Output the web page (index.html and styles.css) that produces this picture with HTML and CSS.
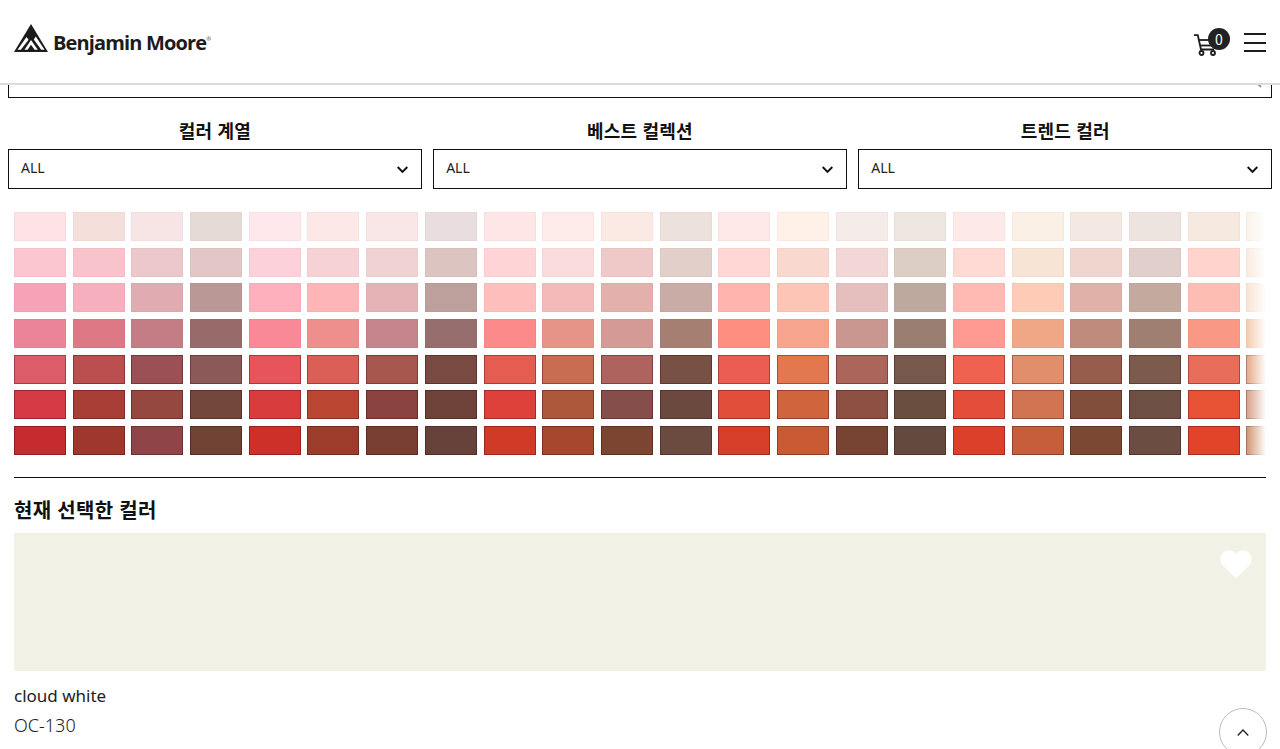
FILE: index.html
```html
<!DOCTYPE html>
<html lang="ko">
<head>
  <meta charset="UTF-8">
  <title>Benjamin Moore</title>
  <link rel="stylesheet" href="styles.css">
</head>
<body>
  <header class="site-header">
    <a class="logo">
      <svg class="logo-mark" width="34" height="28" viewBox="0 0 34 28">
        <path d="M17 0 L34 28 H0 Z" fill="#1c1c1c"/>
        <path d="M12.5 13 L3.5 25.8 H6.8 L14.6 15.8 Z" fill="#fff"/>
        <path d="M17 16 L10.5 25.8 H13.6 L17 20.8 L20.6 25.8 H23.8 Z" fill="#fff"/>
        <path d="M21.8 12.5 L30.6 25.8 H27.2 L19.8 15.4 Z" fill="#fff"/>
      </svg>
      <span class="logo-text">Benjamin Moore<sup class="logo-reg">®</sup></span>
    </a>
    <div class="header-tools">
      <a class="cart">
        <svg width="26" height="24" viewBox="0 0 26 24" fill="none" stroke="#1c1c1c" stroke-width="1.8">
          <path d="M0 2.2 H3.8 L7 16.5 H20"/>
          <path d="M4.5 7 H18"/>
          <path d="M6 12.5 H19"/>
          <circle cx="7.5" cy="20" r="2"/>
          <circle cx="19" cy="20" r="2"/>
        </svg>
        <span class="cart-count">0</span>
      </a>
      <a class="menu-btn"><span></span><span></span><span></span></a>
    </div>
  </header>

  <div class="search-box">
    <svg class="search-icon" width="16" height="16" viewBox="0 0 16 16" fill="none" stroke="#999" stroke-width="2">
      <circle cx="6" cy="6" r="5"/>
      <path d="M9.5 9.5 L15 15"/>
    </svg>
  </div>

  <section class="filters">
    <div class="filter">
      <h3 class="filter-title">컬러 계열</h3>
      <div class="select"><span>ALL</span><svg width="11" height="8" viewBox="0 0 11 8" fill="none" stroke="#111" stroke-width="1.9"><path d="M0.7 1 L5.5 6 L10.3 1"/></svg></div>
    </div>
    <div class="filter">
      <h3 class="filter-title">베스트 컬렉션</h3>
      <div class="select"><span>ALL</span><svg width="11" height="8" viewBox="0 0 11 8" fill="none" stroke="#111" stroke-width="1.9"><path d="M0.7 1 L5.5 6 L10.3 1"/></svg></div>
    </div>
    <div class="filter">
      <h3 class="filter-title">트렌드 컬러</h3>
      <div class="select"><span>ALL</span><svg width="11" height="8" viewBox="0 0 11 8" fill="none" stroke="#111" stroke-width="1.9"><path d="M0.7 1 L5.5 6 L10.3 1"/></svg></div>
    </div>
  </section>

  <section class="palette" id="palette"></section>

  <section class="current">
    <h2 class="current-title">현재 선택한 컬러</h2>
    <div class="current-color">
      <svg class="heart" width="32" height="29" viewBox="0 0 32 29"><path d="M16 28.5 L3 15.5 C-1 11 0 3.5 5 1.2 C9.5 -0.8 13.5 0.8 16 4.2 C18.5 0.8 22.5 -0.8 27 1.2 C32 3.5 33 11 29 15.5 Z" fill="#fff"/></svg>
    </div>
    <p class="color-name">cloud white</p>
    <p class="color-code">OC-130</p>
  </section>

  <a class="to-top">
    <svg width="12" height="7" viewBox="0 0 12 7" fill="none" stroke="#222" stroke-width="1.3"><path d="M0.7 6.5 L6 1 L11.3 6.5"/></svg>
  </a>

  <script src="palette.js"></script>
</body>
</html>
```

FILE: styles.css
```css
* {
  box-sizing: border-box;
}

html, body {
  height: 100%;
  overflow: hidden;
}

body {
  margin: 0;
  background: #fff;
  color: #111;
  font-family: "Noto Sans CJK KR", "Noto Sans", sans-serif;
}

.site-header {
  position: relative;
  z-index: 10;
  display: flex;
  justify-content: space-between;
  align-items: center;
  height: 85px;
  padding: 0 14px;
  background: #fff;
  border-bottom: 2px solid #dcdcdc;
}

.logo {
  display: flex;
  align-items: flex-start;
  gap: 5px;
  height: 36px;
}

.logo-text {
  margin-top: 6px;
  font-family: "Open Sans", sans-serif;
  font-size: 20px;
  font-weight: 700;
  line-height: 26px;
  color: #1c1c1c;
  letter-spacing: -0.85px;
}

.logo-reg {
  font-size: 6px;
  color: #777;
  vertical-align: 9px;
  line-height: 0;
}

.header-tools {
  display: flex;
  align-items: center;
  gap: 14px;
}

.cart {
  position: relative;
  display: block;
  width: 36px;
  height: 24px;
  margin-top: 7px;
}

.cart svg {
  display: block;
}

.cart-count {
  position: absolute;
  top: -5px;
  right: 0;
  width: 22px;
  height: 22px;
  border-radius: 50%;
  background: #222;
  color: #fff;
  font-size: 14px;
  line-height: 22px;
  text-align: center;
}

.menu-btn {
  display: flex;
  flex-direction: column;
  gap: 6.5px;
  width: 22px;
  margin-top: 2px;
}

.menu-btn span {
  height: 2px;
  background: #1c1c1c;
}

.search-box {
  position: relative;
  height: 40px;
  margin: -27px 8px 0;
  border: 1px solid #111;
}

.search-icon {
  position: absolute;
  right: 9px;
  top: 13px;
}

.filters {
  display: grid;
  grid-template-columns: repeat(3, 1fr);
  gap: 11.5px;
  margin: 20px 8px 0;
}

.filter-title {
  margin: 0 0 6px;
  font-size: 18px;
  font-weight: 700;
  line-height: 25px;
  letter-spacing: 0.2px;
  text-align: center;
}

.select {
  display: flex;
  justify-content: space-between;
  align-items: center;
  height: 40px;
  padding: 0 13px 0 12px;
  border: 1px solid #111;
  font-family: "Noto Sans", sans-serif;
  font-size: 14px;
}

.select span {
  margin-bottom: 3px;
  color: #222;
}

.select svg {
  margin-top: 1px;
}

.palette {
  position: relative;
  display: grid;
  grid-template-columns: repeat(22, 52px);
  grid-auto-rows: 29px;
  gap: 6.7px;
  margin: 23px 14px 0;
  overflow: hidden;
}

.palette::after {
  content: "";
  position: absolute;
  top: 0;
  right: 0;
  bottom: 0;
  width: 24px;
  background: linear-gradient(to right, rgba(255, 255, 255, 0), #fff);
}

.swatch {
  border: 1px solid rgba(60, 20, 20, 0.03);
}

.swatch.deep {
  border-color: rgba(50, 10, 10, 0.35);
}

.current {
  margin: 22px 14px 0;
  border-top: 1px solid #111;
}

.current-title {
  margin: 17px 0 9px;
  font-size: 20px;
  font-weight: 700;
  line-height: 29px;
  letter-spacing: 0.3px;
}

.current-color {
  position: relative;
  height: 138px;
  background: #f1f1e6;
}

.heart {
  position: absolute;
  top: 17px;
  right: 14px;
}

.color-name {
  margin: 12px 0 0;
  font-family: "Noto Sans", sans-serif;
  font-size: 17px;
  line-height: 26px;
  color: #222;
}

.color-code {
  margin: 3px 0 0;
  font-family: "Noto Sans", sans-serif;
  font-size: 18px;
  font-weight: 300;
  line-height: 26px;
  color: #222;
}

.to-top {
  position: fixed;
  left: 1219px;
  top: 708px;
  display: flex;
  justify-content: center;
  align-items: center;
  width: 48px;
  height: 48px;
  border: 1px solid #bbb;
  border-radius: 50%;
  background: #fff;
}
```

FILE: palette.js
```js
// one list per column, lightest row first
var columns = [
  ["#fde2e6", "#fbc6d0", "#f6a3b7", "#ec8499", "#dc5d69", "#d43a44", "#c42c2f"],
  ["#f4dfda", "#f9c3cb", "#f6b0bd", "#dd7885", "#bb4e4e", "#a93e36", "#9f372c"],
  ["#f7e5e5", "#ecc8cc", "#e0acb1", "#c47d85", "#9a5054", "#95483f", "#8f4548"],
  ["#e6dbd4", "#e2c7c7", "#ba9896", "#986b6b", "#8b5a58", "#73473c", "#704234"],
  ["#fee8ec", "#fdd1da", "#feb0bc", "#f98997", "#e7545a", "#d93c3c", "#cd2f29"],
  ["#fce9e7", "#f7d2d5", "#fdb5b8", "#ee8f8d", "#db5f56", "#bb4632", "#9c3d2b"],
  ["#f9e6e6", "#f0d2d2", "#e5b2b5", "#c6858c", "#a6584f", "#8a423e", "#793e32"],
  ["#e9dde0", "#dcc4c1", "#bd9f9b", "#966e6e", "#784a42", "#6d4239", "#66423a"],
  ["#fee6e7", "#fed4d6", "#febfbc", "#fc8a8a", "#e55c50", "#dd413a", "#d03b27"],
  ["#fcebe9", "#f9dcdb", "#f4baba", "#e69488", "#c96c50", "#ad583b", "#a5482d"],
  ["#fbe9e4", "#efc9c7", "#e4b0ac", "#d49a96", "#af635e", "#864e4a", "#7c4532"],
  ["#ece2db", "#e2cfc9", "#c8aca5", "#a58072", "#785145", "#6c493f", "#6b4a40"],
  ["#fee9e8", "#ffd8d5", "#ffb4ae", "#fe8e80", "#ea5d50", "#e14f3b", "#d73e29"],
  ["#fff0e8", "#f9d9cf", "#fcc5b5", "#f6a48d", "#e3774e", "#d0653d", "#c95b34"],
  ["#f5ebe8", "#f3d7d6", "#e5bfbd", "#c99690", "#ab655a", "#8d5144", "#774433"],
  ["#ece6df", "#dccdc5", "#bea99f", "#9a7e72", "#76584c", "#6a4f40", "#644a3e"],
  ["#fee9e9", "#ffd9d4", "#ffbab3", "#fe9a91", "#f0614f", "#e34e3a", "#dd402a"],
  ["#faf0e6", "#f7e4d4", "#fdcbb6", "#efa786", "#e18f6a", "#d07452", "#c65e3b"],
  ["#f4e9e2", "#efd5ce", "#e0b1a9", "#bf8b7c", "#985c4c", "#824e3c", "#7b4833"],
  ["#eee4df", "#e0cfca", "#c3a99e", "#9f7f72", "#7c5a4c", "#6d5043", "#6b4e41"],
  ["#f5e9e0", "#fed4cd", "#fdbdb2", "#f99885", "#e96e5a", "#e65233", "#e14428"],
  ["#f8f0e2", "#f9e6d8", "#f8dcc8", "#f2c09c", "#e0956a", "#d08a6c", "#c87c50"]
];

var palette = document.getElementById("palette");

for (var row = 0; row < 7; row++) {
  columns.forEach(function (col) {
    var swatch = document.createElement("div");
    swatch.className = row > 3 ? "swatch deep" : "swatch";
    swatch.style.background = col[row];
    palette.appendChild(swatch);
  });
}
```
